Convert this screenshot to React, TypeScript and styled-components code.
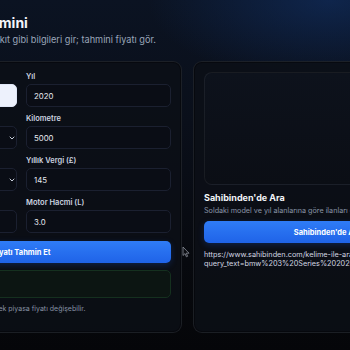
import React from "react"
import styled, { createGlobalStyle } from "styled-components"

const GlobalStyle = createGlobalStyle`
  html, body {
    margin: 0;
    padding: 0;
    width: 350px;
    height: 350px;
    overflow: hidden;
    background: #06080c;
  }
  body {
    font-family: Inter, "Noto Sans", sans-serif;
  }
`

const Page = styled.div`
  position: relative;
  width: 350px;
  height: 350px;
  overflow: hidden;
  background:
    radial-gradient(ellipse 260px 120px at 330px 0px, rgba(18, 52, 110, 0.55), transparent 70%),
    linear-gradient(180deg, #0b1322 0%, #0a0f1a 35%, #07090e 75%, #050609 100%);
`

const Shell = styled.div`
  margin-left: -139px;
  padding-top: 14px;
  width: 620px;
`

const Title = styled.h1`
  margin: 0;
  font-size: 14px;
  line-height: 18px;
  font-weight: 700;
  color: #f3f5fa;
`

const Subtitle = styled.p`
  margin: 2px 0 0;
  font-size: 9.2px;
  line-height: 11px;
  color: #9aa6ba;
`

const Columns = styled.div`
  display: grid;
  grid-template-columns: 321px 269px;
  gap: 11px;
  margin-top: 16px;
`

const Panel = styled.section`
  height: 272px;
  box-sizing: border-box;
  border: 1px solid rgba(255, 255, 255, 0.07);
  border-radius: 9px;
  background: rgba(12, 15, 22, 0.85);
  box-shadow: inset 0 0 0 1px rgba(0, 0, 0, 0.35);
  padding: 9px 10px 10px;
`

const FormGrid = styled.div`
  display: grid;
  grid-template-columns: 1fr 1fr;
  column-gap: 9px;
  row-gap: 6px;
`

const Field = styled.div`
  display: flex;
  flex-direction: column;
`

const Label = styled.label`
  font-size: 7.5px;
  line-height: 11px;
  font-weight: 600;
  color: #cdd4e0;
  margin-bottom: 2px;
`

const InputBox = styled.div<{ $filled?: boolean; $select?: boolean }>`
  height: 23px;
  box-sizing: border-box;
  display: flex;
  align-items: center;
  justify-content: space-between;
  padding: 0 ${p => (p.$select ? 1.5 : 7)}px 0 7px;
  border-radius: 5px;
  border: 1px solid ${p => (p.$filled ? "#dfe6f6" : "#1b2030")};
  background: ${p => (p.$filled ? "#edf1fc" : "#0a0d15")};
  font-size: 7.8px;
  color: ${p => (p.$filled ? "#111827" : "#e6e9ef")};
`

const Chevron = () => (
  <svg width="6" height="4" viewBox="0 0 6 4" fill="none">
    <path d="M1 1 L3 3 L5 1" stroke="#c6ccd8" strokeWidth="1" strokeLinecap="round" strokeLinejoin="round" />
  </svg>
)

const PrimaryButton = styled.button<{ $top?: number }>`
  display: block;
  width: 100%;
  height: 22px;
  margin-top: ${p => p.$top ?? 8}px;
  border: none;
  border-radius: 5px;
  background: linear-gradient(180deg, #2f7cf6 0%, #1f63e8 100%);
  color: #ffffff;
  font-family: inherit;
  font-size: 7.5px;
  font-weight: 700;
  box-shadow: 0 2px 6px rgba(29, 95, 230, 0.25);
`

const ResultBox = styled.div`
  height: 28px;
  box-sizing: border-box;
  margin-top: 7px;
  border-radius: 5px;
  border: 1px solid #15301f;
  background: #0c1512;
`

const Note = styled.p`
  margin: 6px 0 0;
  font-size: 7px;
  line-height: 10px;
  color: #8792a5;
`

const Preview = styled.div`
  height: 113px;
  margin-top: 1px;
  box-sizing: border-box;
  border-radius: 8px;
  border: 1px solid rgba(255, 255, 255, 0.06);
  background: linear-gradient(180deg, #0d121c 0%, #0b0e15 100%);
`

const SearchTitle = styled.h2`
  margin: 6px 0 0;
  font-size: 9px;
  line-height: 14px;
  font-weight: 700;
  color: #f2f4f8;
`

const SearchHint = styled.p`
  margin: 1px 0 0;
  font-size: 7.2px;
  line-height: 10px;
  color: #8a95a8;
`

const UrlText = styled.p`
  margin: 7px 0 0;
  font-size: 7.3px;
  line-height: 9px;
  color: #d3d8e2;
`

const Cursor = styled.svg`
  position: absolute;
  left: 182px;
  top: 246px;
`

type FieldData = { label: string; value: string; filled?: boolean; select?: boolean }

const fields: { left: FieldData; right: FieldData }[] = [
  { left: { label: "Model", value: "", filled: true }, right: { label: "Yıl", value: "2020" } },
  { left: { label: "Vites", value: "Otomatik", select: true }, right: { label: "Kilometre", value: "5000" } },
  { left: { label: "Yakıt", value: "Dizel", select: true }, right: { label: "Yıllık Vergi (£)", value: "145" } },
  { left: { label: "MPG", value: "" }, right: { label: "Motor Hacmi (L)", value: "3.0" } },
]

const FormField = ({ data }: { data: FieldData }) => (
  <Field>
    <Label>{data.label}</Label>
    <InputBox $filled={data.filled} $select={data.select}>
      <span>{data.value}</span>
      {data.select && <Chevron />}
    </InputBox>
  </Field>
)

const App = () => {
  return (
    <Page>
      <GlobalStyle />
      <Shell>
        <Title>BMW Araç Fiyat Tahmini</Title>
        <Subtitle>Model, yıl, kilometre, vites ve yakıt gibi bilgileri gir; tahmini fiyatı gör.</Subtitle>
        <Columns>
          <Panel>
            <FormGrid>
              {fields.map(row => (
                <React.Fragment key={row.right.label}>
                  <FormField data={row.left} />
                  <FormField data={row.right} />
                </React.Fragment>
              ))}
            </FormGrid>
            <PrimaryButton>Fiyatı Tahmin Et</PrimaryButton>
            <ResultBox />
            <Note>Bu fiyat, yalnızca bir tahmindir ve gerçek piyasa fiyatı değişebilir.</Note>
          </Panel>
          <Panel>
            <Preview />
            <SearchTitle>Sahibinden'de Ara</SearchTitle>
            <SearchHint>Soldaki model ve yıl alanlarına göre ilanları gör.</SearchHint>
            <PrimaryButton $top={5}>Sahibinden'de Ara</PrimaryButton>
            <UrlText>
              https://www.sahibinden.com/kelime-ile-arama?<wbr />query_text=bmw%203%20Series%202020
            </UrlText>
          </Panel>
        </Columns>
      </Shell>
      <Cursor width="8" height="12" viewBox="0 0 8 12">
        <path d="M1 1 L1 9.5 L3 7.6 L4.4 10.8 L5.6 10.3 L4.3 7.2 L7 7.2 Z" fill="#0b0d12" stroke="#8a8f99" strokeWidth="0.8" strokeLinejoin="round" />
      </Cursor>
    </Page>
  )
}

export default App
